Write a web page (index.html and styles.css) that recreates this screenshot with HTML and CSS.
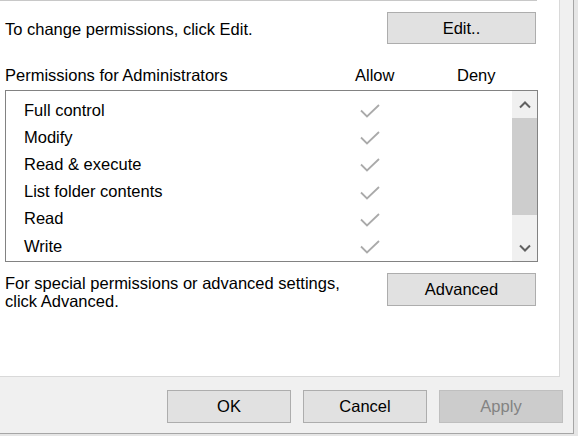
FILE: index.html
```html
<!DOCTYPE html>
<html>
<head>
<meta charset="utf-8">
<link rel="stylesheet" href="styles.css">
</head>
<body>
<div class="window">
  <div class="panel">
    <div class="topline"></div>
    <div class="edit-row">
      <span class="edit-text">To change permissions, click Edit.</span>
      <button class="btn btn-wide">Edit..</button>
    </div>
    <div class="perm-head">
      <span>Permissions for Administrators</span>
      <span>Allow</span>
      <span>Deny</span>
    </div>
    <div class="listbox">
      <ul class="rows">
        <li class="row"><span class="name">Full control</span><span class="check"><svg width="20" height="14" viewBox="0 0 20 14"><polyline points="1,6.5 7,12.5 19,1" /></svg></span></li>
        <li class="row"><span class="name">Modify</span><span class="check"><svg width="20" height="14" viewBox="0 0 20 14"><polyline points="1,6.5 7,12.5 19,1" /></svg></span></li>
        <li class="row"><span class="name">Read &amp; execute</span><span class="check"><svg width="20" height="14" viewBox="0 0 20 14"><polyline points="1,6.5 7,12.5 19,1" /></svg></span></li>
        <li class="row"><span class="name">List folder contents</span><span class="check"><svg width="20" height="14" viewBox="0 0 20 14"><polyline points="1,6.5 7,12.5 19,1" /></svg></span></li>
        <li class="row"><span class="name">Read</span><span class="check"><svg width="20" height="14" viewBox="0 0 20 14"><polyline points="1,6.5 7,12.5 19,1" /></svg></span></li>
        <li class="row"><span class="name">Write</span><span class="check"><svg width="20" height="14" viewBox="0 0 20 14"><polyline points="1,6.5 7,12.5 19,1" /></svg></span></li>
      </ul>
      <div class="scrollbar">
        <div class="arrow"><svg width="12" height="8" viewBox="0 0 12 8"><polyline points="1,6.5 6,1.5 11,6.5" /></svg></div>
        <div class="track"><div class="thumb"></div></div>
        <div class="arrow"><svg width="12" height="8" viewBox="0 0 12 8"><polyline points="1,1.5 6,6.5 11,1.5" /></svg></div>
      </div>
    </div>
    <div class="adv-row">
      <p class="adv-text">For special permissions or advanced settings,<br>click Advanced.</p>
      <button class="btn btn-wide btn-adv">Advanced</button>
    </div>
  </div>
  <div class="footer">
    <button class="btn btn-foot">OK</button>
    <button class="btn btn-foot">Cancel</button>
    <button class="btn btn-foot btn-disabled">Apply</button>
  </div>
</div>
</body>
</html>
```

FILE: styles.css
```css
* {
  box-sizing: border-box;
}

html, body {
  margin: 0;
  padding: 0;
}

body {
  width: 578px;
  height: 436px;
  overflow: hidden;
  background: #e6e6e6;
  font-family: "Liberation Sans", Arial, sans-serif;
  font-size: 16.5px;
  color: #000;
}

.window {
  width: 574px;
  height: 434px;
  background: #f0f0f0;
  border-right: 1px solid #a6a6a6;
  border-bottom: 1px solid #a6a6a6;
}

.panel {
  width: 560px;
  height: 377px;
  background: #fff;
  border-right: 1px solid #d9d9d9;
  border-bottom: 1px solid #d9d9d9;
  padding-left: 5px;
}

.topline {
  height: 1px;
  width: 537px;
  margin-left: -5px;
  background: #c8c8c8;
}

.edit-row {
  width: 531px;
  margin-top: 11px;
  display: flex;
  justify-content: space-between;
  align-items: flex-start;
}

.edit-text {
  line-height: 18px;
  padding-top: 8px;
}

.btn {
  font-family: "Liberation Sans", Arial, sans-serif;
  font-size: 16.5px;
  color: #000;
  background: #e1e1e1;
  border: 1px solid #adadad;
  border-radius: 0;
  padding: 0;
  margin: 0;
}

.btn-wide {
  width: 149px;
  height: 32px;
}

.perm-head {
  display: grid;
  grid-template-columns: 350px 102px auto;
  line-height: 18px;
  margin-top: 22px;
}

.listbox {
  width: 533px;
  height: 172px;
  margin-top: 6px;
  border: 1px solid #828282;
  display: flex;
}

.rows {
  list-style: none;
  margin: 0;
  padding: 5px 0 0 0;
  flex: 1;
}

.row {
  display: grid;
  grid-template-columns: 344px 40px;
  height: 27.2px;
  align-items: center;
}

.name {
  padding-left: 18px;
  line-height: 18px;
}

.check {
  display: flex;
  justify-content: center;
  align-items: center;
  padding-top: 3px;
}

.check svg polyline {
  fill: none;
  stroke: #aaaaaa;
  stroke-width: 1.8;
}

.scrollbar {
  width: 25px;
  background: #f0f0f0;
  display: flex;
  flex-direction: column;
}

.arrow {
  height: 27px;
  display: flex;
  justify-content: center;
  align-items: center;
}

.arrow svg polyline {
  fill: none;
  stroke: #606060;
  stroke-width: 2;
}

.track {
  flex: 1;
}

.thumb {
  height: 97px;
  background: #cdcdcd;
}

.adv-row {
  width: 531px;
  margin-top: 11px;
  display: flex;
  justify-content: space-between;
  align-items: flex-start;
}

.adv-text {
  margin: 1px 0 0 0;
  line-height: 18px;
}

.btn-adv {
  height: 33px;
}

.footer {
  display: flex;
  justify-content: flex-end;
  gap: 12px;
  padding: 13px 10px 0 0;
}

.btn-foot {
  width: 124px;
  height: 33px;
}

.btn-disabled {
  background: #cccccc;
  border-color: #bfbfbf;
  color: #838383;
}
```
